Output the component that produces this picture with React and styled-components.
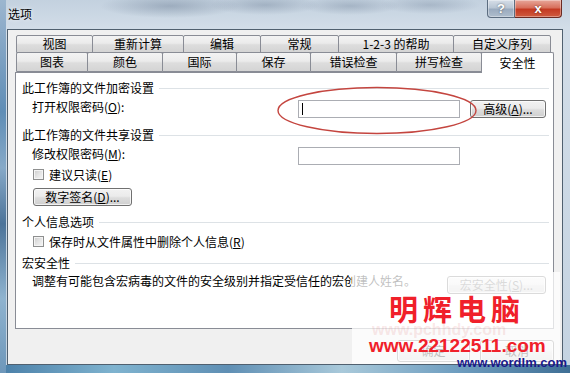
import React from 'react';
import styled, { createGlobalStyle } from 'styled-components';

const GlobalStyle = createGlobalStyle`
  html, body { margin: 0; padding: 0; }
  body {
    width: 570px; height: 373px; overflow: hidden;
    font-family: "Noto Sans CJK SC", "Liberation Sans", sans-serif;
    font-size: 12px; color: #000;
  }
`;

const Window = styled.div`
  position: relative;
  width: 570px;
  height: 373px;
  display: flex;
  flex-direction: column;
  overflow: hidden;
  background:
    linear-gradient(180deg, #9cb6cf 0%, #5f8db6 30%, #86a9c8 45%, #4c7399 60%, #8fb3cf 80%, #6e97ba 100%) left top / 6px 100% no-repeat,
    linear-gradient(90deg, #4a7fa8 0%, #7fb3cf 20%, #5f8fb4 40%, #a9c9da 60%, #6f9ec0 80%, #3f6f95 100%) left bottom / 100% 8px no-repeat,
    radial-gradient(ellipse 70px 12px at 170px 6px, rgba(80, 100, 125, 0.35), transparent),
    radial-gradient(ellipse 55px 10px at 265px 5px, rgba(80, 100, 125, 0.3), transparent),
    radial-gradient(ellipse 50px 9px at 350px 6px, rgba(80, 100, 125, 0.28), transparent),
    radial-gradient(ellipse 50px 9px at 430px 5px, rgba(80, 100, 125, 0.25), transparent),
    linear-gradient(180deg, #c3d1df 0%, #d2dde8 28px, #c4d3e1 100%);
`;

const TitleBar = styled.div`
  height: 29px;
  flex: none;
  display: flex;
  align-items: flex-start;
  padding: 0 8px;
`;

const Title = styled.div`
  margin-top: 7px;
  line-height: 14px;
  font-size: 12px;
  color: #000;
  text-shadow: 0 0 4px rgba(255, 255, 255, 0.9);
`;

const Captions = styled.div`
  margin-left: auto;
  display: flex;
`;

const CaptionButton = styled.div`
  height: 18px;
  width: ${p => p.$w}px;
  box-sizing: border-box;
  display: flex;
  align-items: center;
  justify-content: center;
  font-family: "Liberation Sans", sans-serif;
  font-weight: bold;
  font-size: 13px;
  color: #fff;
  text-shadow: 0 0 2px rgba(0, 0, 0, 0.6);
  border: 1px solid ${p => (p.$close ? '#6b2a22' : '#5c6d80')};
  border-top: none;
  border-left: ${p => (p.$close ? 'none' : undefined)};
  border-radius: ${p => (p.$close ? '0 0 4px 0' : '0 0 0 4px')};
  background: ${p =>
    p.$close
      ? 'linear-gradient(180deg, #e7a79a 0%, #d8705c 45%, #c43a22 55%, #cf5b3f 100%)'
      : 'linear-gradient(180deg, #d6dee8 0%, #b9c6d4 45%, #9aabbf 55%, #aebdcd 100%)'};
  box-shadow: inset 0 0 0 1px rgba(255, 255, 255, 0.35);
`;

const Client = styled.div`
  flex: 1;
  margin: 0 7px 8px 7px;
  border: 1px solid #50606f;
  background: #f0f0f0;
  display: flex;
  flex-direction: column;
  padding-top: 6px;
`;

const TabRow = styled.div`
  display: flex;
  align-items: flex-end;
  height: ${p => p.$h}px;
  margin-left: 8px;
`;

const Tab = styled.div`
  box-sizing: border-box;
  width: ${p => p.$w}px;
  height: ${p => (p.$active ? 21 : p.$h)}px;
  margin-left: -1px;
  margin-bottom: ${p => (p.$active ? -1 : 0)}px;
  &:first-child { margin-left: 0; }
  border: 1px solid #898c95;
  border-bottom: ${p => (p.$active ? 'none' : '1px solid #898c95')};
  border-radius: 2px 2px 0 0;
  background: ${p =>
    p.$active ? '#ffffff' : 'linear-gradient(180deg, #f3f3f3 0%, #ebebeb 45%, #dddddd 55%, #d4d4d4 100%)'};
  position: ${p => (p.$active ? 'relative' : 'static')};
  z-index: ${p => (p.$active ? 2 : 'auto')};
  display: flex;
  align-items: center;
  justify-content: center;
  line-height: 14px;
  white-space: nowrap;
`;

const Panel = styled.div`
  margin-left: 7px;
  width: 539px;
  height: 257px;
  flex: none;
  box-sizing: border-box;
  border: 1px solid #898c95;
  background: #fff;
  display: flex;
  flex-direction: column;
  padding-right: 4px;
`;

const GroupHeader = styled.div`
  display: flex;
  align-items: center;
  height: 14px;
  line-height: 14px;
  margin-top: ${p => p.$mt}px;
  padding-left: 6px;
  white-space: nowrap;
  &::after {
    content: '';
    flex: 1;
    height: 1px;
    margin-left: 5px;
    background: #dde2e6;
  }
`;

const FieldRow = styled.div`
  display: flex;
  align-items: flex-start;
  height: 18px;
  margin-top: ${p => p.$mt}px;
  padding-left: 16px;
`;

const FieldLabel = styled.div`
  width: 266px;
  flex: none;
  line-height: 14px;
  white-space: nowrap;
`;

const Mn = styled.span`
  text-decoration: underline;
`;

const TextBox = styled.div`
  width: 162px;
  height: 18px;
  box-sizing: border-box;
  border: 1px solid #abadb3;
  background: #fff;
  display: flex;
  align-items: center;
`;

const Caret = styled.span`
  width: 1px;
  height: 12px;
  margin-left: 3px;
  background: #000;
`;

const Button = styled.div`
  box-sizing: border-box;
  width: ${p => p.$w}px;
  height: ${p => p.$h || 18}px;
  margin-left: ${p => p.$ml || 0}px;
  margin-top: ${p => p.$mt || 0}px;
  flex: none;
  border: 1px solid #707070;
  border-radius: 3px;
  background: linear-gradient(180deg, #f2f2f2 0%, #ebebeb 45%, #dddddd 55%, #cfcfcf 100%);
  box-shadow: inset 0 0 0 1px rgba(255, 255, 255, 0.7);
  display: flex;
  align-items: center;
  justify-content: center;
  line-height: 14px;
  white-space: nowrap;
  color: ${p => (p.$muted ? '#6d6d6d' : '#000')};
`;

const CheckRow = styled.div`
  display: flex;
  align-items: center;
  gap: 5px;
  height: 13px;
  line-height: 14px;
  margin-top: ${p => p.$mt}px;
  padding-left: 17px;
  white-space: nowrap;
`;

const CheckBox = styled.span`
  width: 11px;
  height: 11px;
  box-sizing: border-box;
  flex: none;
  border: 1px solid #8e8f8f;
  background: linear-gradient(135deg, #cbcbcb 0%, #e4e4e4 50%, #f6f6f6 100%);
  box-shadow: inset 0 0 0 1px #f4f4f4;
`;

const DescRow = styled.div`
  display: flex;
  justify-content: space-between;
  align-items: flex-start;
  margin-top: ${p => p.$mt}px;
  padding-left: 16px;
  padding-right: 3px;
`;

const DescText = styled.div`
  line-height: 14px;
  white-space: nowrap;
`;

const Footer = styled.div`
  flex: 1;
  display: flex;
  justify-content: flex-end;
  align-items: flex-end;
  gap: 10px;
  padding: 0 8px 2px 0;
`;

const Ellipse = styled.svg`
  position: absolute;
  left: 276px;
  top: 86px;
  width: 202px;
  height: 49px;
  overflow: visible;
`;

const Wash = styled.div`
  position: absolute;
  left: 352px;
  top: 272px;
  width: 208px;
  height: 92px;
  background: rgba(255, 255, 255, 0.75);
`;

const MarkFaint = styled.div`
  position: absolute;
  left: 372px;
  top: 322px;
  font-family: "Liberation Sans", sans-serif;
  font-weight: bold;
  font-size: 16px;
  line-height: 16px;
  color: rgba(225, 120, 120, 0.18);
  white-space: nowrap;
`;

const MarkTitle = styled.div`
  position: absolute;
  left: 389px;
  top: 294px;
  font-family: "Noto Sans CJK SC", sans-serif;
  font-weight: 700;
  font-size: 29px;
  line-height: 29px;
  letter-spacing: 5px;
  color: #f0202a;
  white-space: nowrap;
`;

const MarkUrl = styled.div`
  position: absolute;
  left: 369px;
  top: 336px;
  font-family: "Liberation Sans", sans-serif;
  font-weight: bold;
  font-size: 19px;
  line-height: 19px;
  color: #f0202a;
  white-space: nowrap;
`;

const MarkBlue = styled.div`
  position: absolute;
  left: 457px;
  top: 356px;
  font-family: "Liberation Sans", sans-serif;
  font-weight: bold;
  font-size: 13px;
  line-height: 13px;
  color: #1a1a8c;
  white-space: nowrap;
`;

const backTabs = [
  ['视图', 77],
  ['重新计算', 92],
  ['编辑', 78],
  ['常规', 79],
  ['1-2-3 的帮助', 116],
  ['自定义序列', 98],
];

const frontTabs = [
  ['图表', 72],
  ['颜色', 76],
  ['国际', 75],
  ['保存', 75],
  ['错误检查', 87],
  ['拼写检查', 86],
  ['安全性', 73, true],
];

export default function App() {
  return (
    <>
      <GlobalStyle />
      <Window>
        <TitleBar>
          <Title>选项</Title>
          <Captions>
            <CaptionButton $w={28}>?</CaptionButton>
            <CaptionButton $w={47} $close>x</CaptionButton>
          </Captions>
        </TitleBar>
        <Client>
          <TabRow $h={17}>
            {backTabs.map(([t, w]) => (
              <Tab key={t} $w={w} $h={18}>{t}</Tab>
            ))}
          </TabRow>
          <TabRow $h={19}>
            {frontTabs.map(([t, w, a]) => (
              <Tab key={t} $w={w} $h={20} $active={a}>{t}</Tab>
            ))}
          </TabRow>
          <Panel>
            <GroupHeader $mt={8}>此工作簿的文件加密设置</GroupHeader>
            <FieldRow $mt={5}>
              <FieldLabel>打开权限密码(<Mn>O</Mn>):</FieldLabel>
              <TextBox><Caret /></TextBox>
              <Button $w={76} $ml={10}>高级(<Mn>A</Mn>)...</Button>
            </FieldRow>
            <GroupHeader $mt={10}>此工作簿的文件共享设置</GroupHeader>
            <FieldRow $mt={5}>
              <FieldLabel>修改权限密码(<Mn>M</Mn>):</FieldLabel>
              <TextBox />
            </FieldRow>
            <CheckRow $mt={3}>
              <CheckBox />
              <span>建议只读(<Mn>E</Mn>)</span>
            </CheckRow>
            <Button $w={99} $ml={17} $mt={7}>数字签名(<Mn>D</Mn>)...</Button>
            <GroupHeader $mt={9}>个人信息选项</GroupHeader>
            <CheckRow $mt={6}>
              <CheckBox />
              <span>保存时从文件属性中删除个人信息(<Mn>R</Mn>)</span>
            </CheckRow>
            <GroupHeader $mt={8}>宏安全性</GroupHeader>
            <DescRow $mt={4}>
              <DescText>调整有可能包含宏病毒的文件的安全级别并指定受信任的宏创建人姓名。</DescText>
              <Button $w={99} $mt={2} $muted>宏安全性(<Mn>S</Mn>)...</Button>
            </DescRow>
          </Panel>
          <Footer>
            <Button $w={73} $h={22}>确定</Button>
            <Button $w={74} $h={22}>取消</Button>
          </Footer>
        </Client>
        <Ellipse viewBox="0 0 202 49">
          <ellipse cx="101" cy="24.5" rx="99" ry="23" fill="none" stroke="#c4453f" strokeWidth="1.4" />
        </Ellipse>
        <Wash />
        <MarkFaint>www.pchhdy.com</MarkFaint>
        <MarkTitle>明辉电脑</MarkTitle>
        <MarkUrl>www.22122511.com</MarkUrl>
        <MarkBlue>www.wordlm.com</MarkBlue>
      </Window>
    </>
  );
}
